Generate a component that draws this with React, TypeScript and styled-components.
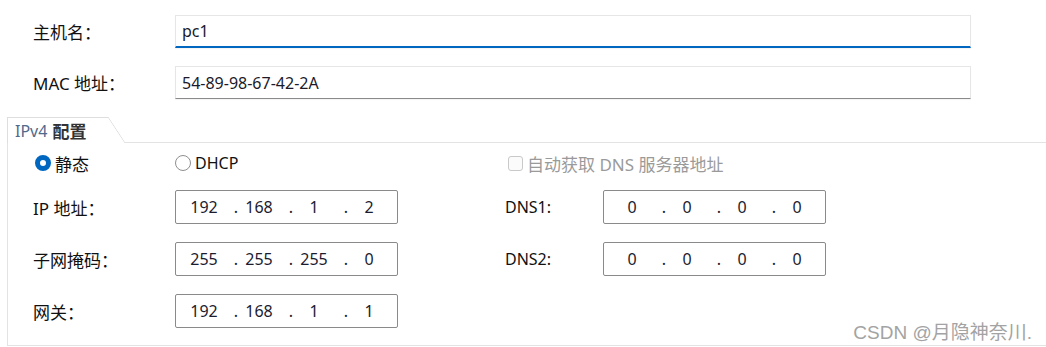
import React from 'react';
import styled, { createGlobalStyle } from 'styled-components';

const GlobalStyle = createGlobalStyle`
    html, body {
        margin: 0;
        padding: 0;
        background: #ffffff;
    }
    body {
        font-family: "Noto Sans", "Noto Sans CJK SC", sans-serif;
        color: #1a1a1a;
    }
`;

const Page = styled.div`
    position: relative;
    width: 1046px;
    height: 347px;
    overflow: hidden;
    padding-top: 15px;
    box-sizing: border-box;
`;

const TopForm = styled.div`
    display: grid;
    grid-template-columns: 142px 796px;
    row-gap: 18px;
    padding-left: 33px;
    align-items: center;
`;

const Label = styled.div<{ $latin?: boolean }>`
    font-family: "Noto Sans", "Noto Sans CJK SC", sans-serif;
    font-size: ${p => (p.$latin ? 16 : 17)}px;
    color: #111;
    white-space: nowrap;
`;

const TextField = styled.div<{ $focused?: boolean }>`
    height: 33px;
    box-sizing: border-box;
    display: flex;
    align-items: center;
    padding: 0 6px 0 6px;
    font-size: 16px;
    color: #1a1a2a;
    background: #fff;
    border: 1px solid #e6e6e6;
    border-bottom: ${p => (p.$focused ? '2px solid #0067c0' : '1px solid #8a8a8a')};
    box-shadow: 0 1px 1px rgba(0, 0, 0, 0.04);
`;

const Group = styled.div`
    margin: 18px 0 0 7px;
`;

const TabRow = styled.div`
    display: flex;
    height: 26px;
`;

const Tab = styled.div`
    width: 101px;
    box-sizing: border-box;
    border-top: 1px solid #dedede;
    border-left: 1px solid #dedede;
    padding-left: 7px;
    display: flex;
    align-items: center;
    font-size: 16px;
    white-space: nowrap;
`;

const TabSlant = styled.div`
    width: 17px;
    background: linear-gradient(
        to top right,
        transparent calc(50% - 0.7px),
        #dedede 50%,
        transparent calc(50% + 0.7px)
    );
`;

const TabFill = styled.div`
    flex: 1;
    border-bottom: 1px solid #e3e3e3;
`;

const TabLatin = styled.span`
    color: #4f6a8c;
    margin-right: 5px;
`;

const TabCjk = styled.span`
    color: #333;
    font-weight: 700;
    font-size: 17px;
`;

const Panel = styled.div`
    height: 203px;
    box-sizing: border-box;
    border-left: 1px solid #e3e3e3;
    border-bottom: 1px solid #e3e3e3;
    padding: 11px 0 0 25px;
    display: grid;
    grid-template-columns: 142px 223px 107px 98px 223px;
    grid-template-rows: 18px 34px 34px 34px;
    row-gap: 18px;
    align-items: center;
`;

const Choice = styled.div<{ $indent?: number; $span?: number; $disabled?: boolean }>`
    display: flex;
    align-items: center;
    gap: 4px;
    margin-left: ${p => p.$indent ?? 0}px;
    grid-column: ${p => (p.$span ? `span ${p.$span}` : 'auto')};
    font-size: 17px;
    color: ${p => (p.$disabled ? '#9a9a9a' : '#111')};
    white-space: nowrap;
`;

const LatinText = styled.span`
    font-size: 16px;
`;

const Radio = styled.span<{ $checked?: boolean }>`
    width: 16px;
    height: 16px;
    box-sizing: border-box;
    border-radius: 50%;
    background: #fff;
    border: ${p => (p.$checked ? '5px solid #0067c0' : '1px solid #8f8f8f')};
    flex-shrink: 0;
`;

const Check = styled.span`
    width: 15px;
    height: 15px;
    box-sizing: border-box;
    border-radius: 3px;
    border: 1px solid #c9c9c9;
    background: #fbfbfb;
    flex-shrink: 0;
`;

const Spacer = styled.div``;

const IpBox = styled.div`
    height: 34px;
    box-sizing: border-box;
    border: 1px solid #8a8a8a;
    border-radius: 2px;
    background: #fff;
    display: flex;
    align-items: center;
    padding-left: 8px;
    font-size: 16px;
    color: #1c1c30;
`;

const Octet = styled.span`
    width: 40px;
    text-align: center;
`;

const Dot = styled.span`
    width: 15px;
    text-align: right;
    padding-right: 1px;
    box-sizing: border-box;
`;

const Watermark = styled.div`
    position: absolute;
    right: 14px;
    top: 317px;
    font-family: "Liberation Sans", "Noto Sans CJK SC", sans-serif;
    font-size: 19px;
    color: #a3a3a3;
`;

const IpField: React.FC<{ value: string }> = ({ value }) => {
    const parts = value.split('.');
    return (
        <IpBox>
            {parts.map((p, i) => (
                <React.Fragment key={i}>
                    {i > 0 && <Dot>.</Dot>}
                    <Octet>{p}</Octet>
                </React.Fragment>
            ))}
        </IpBox>
    );
};

export default function App() {
    return (
        <Page>
            <GlobalStyle />
            <TopForm>
                <Label>主机名：</Label>
                <TextField $focused>pc1</TextField>
                <Label>MAC 地址：</Label>
                <TextField>54-89-98-67-42-2A</TextField>
            </TopForm>
            <Group>
                <TabRow>
                    <Tab>
                        <TabLatin>IPv4</TabLatin>
                        <TabCjk>配置</TabCjk>
                    </Tab>
                    <TabSlant />
                    <TabFill />
                </TabRow>
                <Panel>
                    <Choice $indent={2}>
                        <Radio $checked />
                        静态
                    </Choice>
                    <Choice>
                        <Radio />
                        <LatinText>DHCP</LatinText>
                    </Choice>
                    <Spacer />
                    <Choice $indent={3} $span={2} $disabled>
                        <Check />
                        自动获取 DNS 服务器地址
                    </Choice>

                    <Label>IP 地址：</Label>
                    <IpField value="192.168.1.2" />
                    <Spacer />
                    <Label $latin>DNS1:</Label>
                    <IpField value="0.0.0.0" />

                    <Label>子网掩码：</Label>
                    <IpField value="255.255.255.0" />
                    <Spacer />
                    <Label $latin>DNS2:</Label>
                    <IpField value="0.0.0.0" />

                    <Label>网关：</Label>
                    <IpField value="192.168.1.1" />
                </Panel>
            </Group>
            <Watermark>CSDN @月隐神奈川.</Watermark>
        </Page>
    );
}
